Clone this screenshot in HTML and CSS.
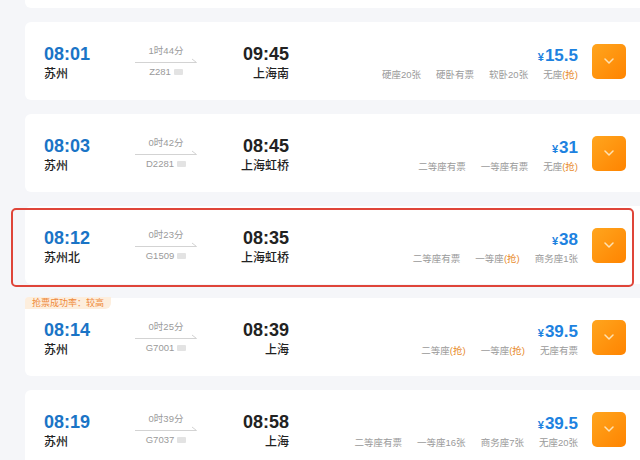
FILE: index.html
```html
<!DOCTYPE html>
<html lang="zh-CN">
<head>
    <meta charset="UTF-8">
    <meta name="viewport" content="width=device-width, initial-scale=1.0">
    <title>车次列表</title>
    <link rel="stylesheet" href="styles.css">
</head>
<body>

<div id="train-list">
    <div class="card stub"></div>

    <div class="card">
        <div class="dep">
            <div class="time">08:01</div>
            <div class="city">苏州</div>
        </div>
        <div class="mid">
            <div class="dur">1时44分</div>
            <svg class="arrow" width="62" height="6" viewBox="0 0 62 6"><path d="M0 5.5H61.5L57 2" fill="none" stroke="#d3d3d3" stroke-width="1"/></svg>
            <div class="no">Z281 <span class="tag"></span></div>
        </div>
        <div class="arr">
            <div class="time">09:45</div>
            <div class="city">上海南</div>
        </div>
        <div class="right">
            <div class="price"><span class="yen">¥</span>15.5</div>
            <div class="seats">
                <span>硬座20张</span><span>硬卧有票</span><span>软卧20张</span><span>无座<em>(抢)</em></span>
            </div>
        </div>
        <button class="more"><svg width="10" height="6" viewBox="0 0 10 6"><path d="M1 1L5 5L9 1" fill="none" stroke="#fde2b4" stroke-width="1.5" stroke-linecap="round" stroke-linejoin="round"/></svg></button>
    </div>

    <div class="card">
        <div class="dep">
            <div class="time">08:03</div>
            <div class="city">苏州</div>
        </div>
        <div class="mid">
            <div class="dur">0时42分</div>
            <svg class="arrow" width="62" height="6" viewBox="0 0 62 6"><path d="M0 5.5H61.5L57 2" fill="none" stroke="#d3d3d3" stroke-width="1"/></svg>
            <div class="no">D2281 <span class="tag"></span></div>
        </div>
        <div class="arr">
            <div class="time">08:45</div>
            <div class="city">上海虹桥</div>
        </div>
        <div class="right">
            <div class="price"><span class="yen">¥</span>31</div>
            <div class="seats">
                <span>二等座有票</span><span>一等座有票</span><span>无座<em>(抢)</em></span>
            </div>
        </div>
        <button class="more"><svg width="10" height="6" viewBox="0 0 10 6"><path d="M1 1L5 5L9 1" fill="none" stroke="#fde2b4" stroke-width="1.5" stroke-linecap="round" stroke-linejoin="round"/></svg></button>
    </div>

    <div class="card marked">
        <div class="dep">
            <div class="time">08:12</div>
            <div class="city">苏州北</div>
        </div>
        <div class="mid">
            <div class="dur">0时23分</div>
            <svg class="arrow" width="62" height="6" viewBox="0 0 62 6"><path d="M0 5.5H61.5L57 2" fill="none" stroke="#d3d3d3" stroke-width="1"/></svg>
            <div class="no">G1509 <span class="tag"></span></div>
        </div>
        <div class="arr">
            <div class="time">08:35</div>
            <div class="city">上海虹桥</div>
        </div>
        <div class="right">
            <div class="price"><span class="yen">¥</span>38</div>
            <div class="seats">
                <span>二等座有票</span><span>一等座<em>(抢)</em></span><span>商务座1张</span>
            </div>
        </div>
        <button class="more"><svg width="10" height="6" viewBox="0 0 10 6"><path d="M1 1L5 5L9 1" fill="none" stroke="#fde2b4" stroke-width="1.5" stroke-linecap="round" stroke-linejoin="round"/></svg></button>
    </div>

    <div class="card">
        <div class="badge">抢票成功率：较高</div>
        <div class="dep">
            <div class="time">08:14</div>
            <div class="city">苏州</div>
        </div>
        <div class="mid">
            <div class="dur">0时25分</div>
            <svg class="arrow" width="62" height="6" viewBox="0 0 62 6"><path d="M0 5.5H61.5L57 2" fill="none" stroke="#d3d3d3" stroke-width="1"/></svg>
            <div class="no">G7001 <span class="tag"></span></div>
        </div>
        <div class="arr">
            <div class="time">08:39</div>
            <div class="city">上海</div>
        </div>
        <div class="right">
            <div class="price"><span class="yen">¥</span>39.5</div>
            <div class="seats">
                <span>二等座<em>(抢)</em></span><span>一等座<em>(抢)</em></span><span>无座有票</span>
            </div>
        </div>
        <button class="more"><svg width="10" height="6" viewBox="0 0 10 6"><path d="M1 1L5 5L9 1" fill="none" stroke="#fde2b4" stroke-width="1.5" stroke-linecap="round" stroke-linejoin="round"/></svg></button>
    </div>

    <div class="card">
        <div class="dep">
            <div class="time">08:19</div>
            <div class="city">苏州</div>
        </div>
        <div class="mid">
            <div class="dur">0时39分</div>
            <svg class="arrow" width="62" height="6" viewBox="0 0 62 6"><path d="M0 5.5H61.5L57 2" fill="none" stroke="#d3d3d3" stroke-width="1"/></svg>
            <div class="no">G7037 <span class="tag"></span></div>
        </div>
        <div class="arr">
            <div class="time">08:58</div>
            <div class="city">上海</div>
        </div>
        <div class="right">
            <div class="price"><span class="yen">¥</span>39.5</div>
            <div class="seats">
                <span>二等座有票</span><span>一等座16张</span><span>商务座7张</span><span>无座20张</span>
            </div>
        </div>
        <button class="more"><svg width="10" height="6" viewBox="0 0 10 6"><path d="M1 1L5 5L9 1" fill="none" stroke="#fde2b4" stroke-width="1.5" stroke-linecap="round" stroke-linejoin="round"/></svg></button>
    </div>
</div>

</body>
</html>
```

FILE: styles.css
```css
:root {
    --blue: #1a74c6;
    --price: #1d82e0;
    --dark: #222;
    --grey: #9a9a9a;
    --orange: #e88b2c;
    --bg: #f5f6f9;
}
body {
    font-family: 'Liberation Sans', 'Noto Sans CJK SC', sans-serif;
    background: var(--bg);
    margin: 0;
    height: 460px;
    overflow: hidden;
}
#train-list {
    display: flex;
    flex-direction: column;
    gap: 14px;
    padding-left: 25px;
    margin-top: -70px;
}

/* Card */
.card {
    position: relative;
    display: flex;
    align-items: center;
    height: 78px;
    padding: 0 14px 0 19px;
    background: white;
    border-radius: 6px 0 0 6px;
    flex-shrink: 0;
}
.stub { height: 78px; }
.marked::after {
    content: "";
    position: absolute;
    top: 2px; bottom: -3px; left: -14px; right: 6px;
    border: 2px solid #df4539;
    border-radius: 5px;
}

/* Departure / arrival */
.time { font-size: 18px; font-weight: bold; line-height: 20px; }
.city { font-size: 12px; font-weight: 500; color: var(--dark); line-height: 14px; margin-top: 3px; }
.dep, .arr { margin-top: 3px; }
.dep { width: 91px; }
.dep .time { color: var(--blue); }
.arr { width: 92px; text-align: right; }
.arr .time { color: var(--dark); }

/* Duration */
.mid { width: 62px; display: flex; flex-direction: column; align-items: center; color: var(--grey); font-size: 9.5px; }
.dur { line-height: 12px; }
.arrow { display: block; margin-bottom: 3px; }
.no { display: flex; align-items: center; gap: 3px; line-height: 12px; }
.tag { width: 9px; height: 6px; border-radius: 1px; background: #e3e3e3; }

/* Price & seats */
.right { flex: 1; text-align: right; margin-top: 4px; }
.price { color: var(--price); font-size: 17px; font-weight: bold; line-height: 20px; }
.yen { font-size: 11px; margin-right: 1px; }
.seats { display: flex; justify-content: flex-end; gap: 15px; font-size: 9.5px; color: var(--grey); margin-top: 2px; line-height: 12px; }
.seats em { font-style: normal; color: var(--orange); }

.more {
    width: 34px; height: 35px; margin-left: 14px;
    border: none; border-radius: 5px; padding: 0;
    background: linear-gradient(135deg, #ffa51e, #ff8400);
    display: flex; justify-content: center; align-items: center;
}

/* Badge */
.badge {
    position: absolute; top: -1px; left: 0;
    padding: 0 7px; height: 12px; line-height: 12px;
    font-size: 9px; color: #ef8a3a;
    background: #fdeedd;
    border-radius: 4px 0 6px 0;
}
```
